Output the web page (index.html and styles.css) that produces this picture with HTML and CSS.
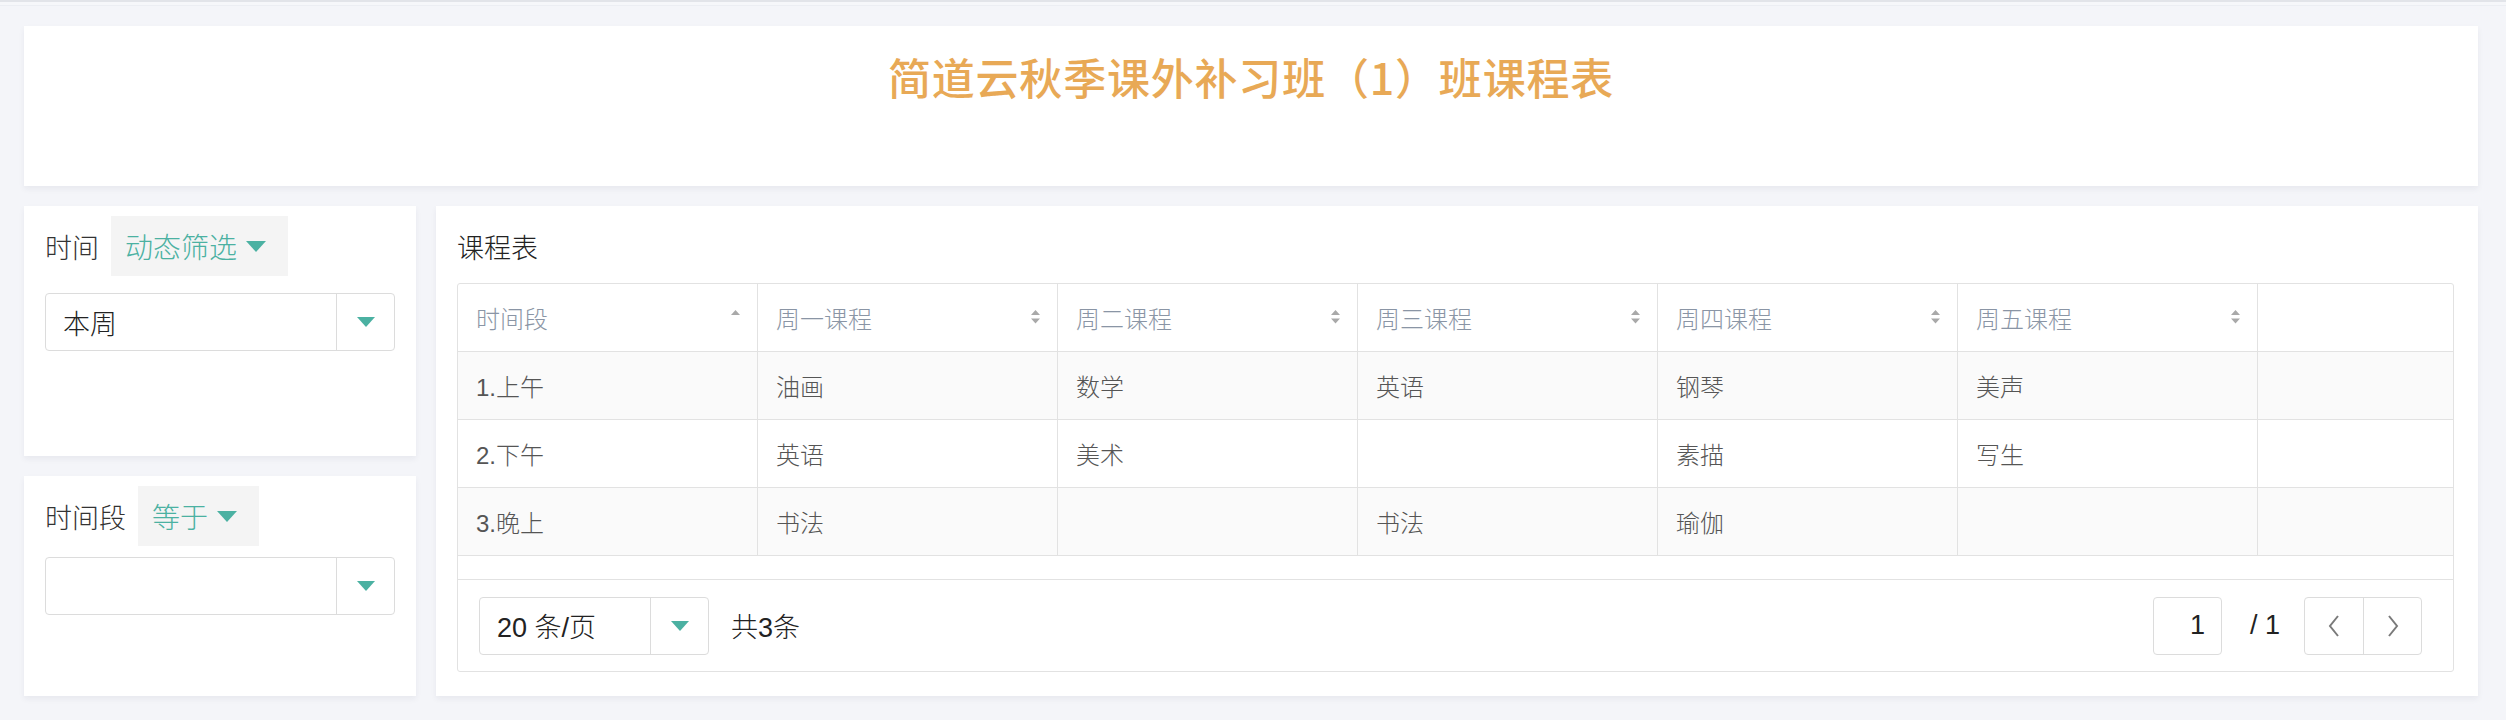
FILE: index.html
```html
<!DOCTYPE html>
<html lang="zh-CN">
<head>
<meta charset="utf-8">
<title>简道云秋季课外补习班（1）班课程表</title>
<link rel="stylesheet" href="styles.css">
</head>
<body>
<div class="topbar"></div>
<div class="page">
  <header class="card title-card">
    <h1 class="title">简道云秋季课外补习班（1）班课程表</h1>
  </header>
  <div class="main">
    <aside class="filters">
      <section class="card filter filter-time">
        <div class="filter-head">
          <span class="label">时间</span>
          <span class="mode">动态筛选<i class="caret caret-lg"></i></span>
        </div>
        <div class="select">
          <span class="select-value">本周</span>
          <span class="select-arrow"><i class="caret"></i></span>
        </div>
      </section>
      <section class="card filter filter-slot">
        <div class="filter-head">
          <span class="label">时间段</span>
          <span class="mode">等于<i class="caret caret-lg"></i></span>
        </div>
        <div class="select select-tight">
          <span class="select-value"></span>
          <span class="select-arrow"><i class="caret"></i></span>
        </div>
      </section>
    </aside>
    <section class="card table-card">
      <div class="table-title">课程表</div>
      <div class="grid">
        <table class="sheet">
          <thead>
            <tr>
              <th class="col"><div class="th-inner"><span>时间段</span><svg class="sort" width="11" height="16" viewBox="0 0 11 16"><path d="M1 6 L5.5 1 L10 6 Z" fill="#a9a9a9"/></svg></div></th>
              <th class="col"><div class="th-inner"><span>周一课程</span><svg class="sort" width="11" height="16" viewBox="0 0 11 16"><path d="M1 6 L5.5 1 L10 6 Z M1 9.5 L5.5 14.5 L10 9.5 Z" fill="#a9a9a9"/></svg></div></th>
              <th class="col"><div class="th-inner"><span>周二课程</span><svg class="sort" width="11" height="16" viewBox="0 0 11 16"><path d="M1 6 L5.5 1 L10 6 Z M1 9.5 L5.5 14.5 L10 9.5 Z" fill="#a9a9a9"/></svg></div></th>
              <th class="col"><div class="th-inner"><span>周三课程</span><svg class="sort" width="11" height="16" viewBox="0 0 11 16"><path d="M1 6 L5.5 1 L10 6 Z M1 9.5 L5.5 14.5 L10 9.5 Z" fill="#a9a9a9"/></svg></div></th>
              <th class="col"><div class="th-inner"><span>周四课程</span><svg class="sort" width="11" height="16" viewBox="0 0 11 16"><path d="M1 6 L5.5 1 L10 6 Z M1 9.5 L5.5 14.5 L10 9.5 Z" fill="#a9a9a9"/></svg></div></th>
              <th class="col"><div class="th-inner"><span>周五课程</span><svg class="sort" width="11" height="16" viewBox="0 0 11 16"><path d="M1 6 L5.5 1 L10 6 Z M1 9.5 L5.5 14.5 L10 9.5 Z" fill="#a9a9a9"/></svg></div></th>
              <th class="col-last"></th>
            </tr>
          </thead>
          <tbody>
            <tr class="odd">
              <td>1.上午</td><td>油画</td><td>数学</td><td>英语</td><td>钢琴</td><td>美声</td><td></td>
            </tr>
            <tr>
              <td>2.下午</td><td>英语</td><td>美术</td><td></td><td>素描</td><td>写生</td><td></td>
            </tr>
            <tr class="odd">
              <td>3.晚上</td><td>书法</td><td></td><td>书法</td><td>瑜伽</td><td></td><td></td>
            </tr>
          </tbody>
        </table>
        <div class="spacer"></div>
        <div class="pager">
          <div class="pager-left">
            <div class="select page-size">
              <span class="select-value">20 条/页</span>
              <span class="select-arrow"><i class="caret"></i></span>
            </div>
            <span class="total">共3条</span>
          </div>
          <div class="pager-right">
            <span class="page-input">1</span>
            <span class="page-count">/ 1</span>
            <div class="nav-group">
              <span class="nav-btn"><svg width="16" height="26" viewBox="0 0 16 26"><path d="M12 3 L4 13 L12 23" fill="none" stroke="#7a7a7a" stroke-width="2"/></svg></span>
              <span class="nav-btn"><svg width="16" height="26" viewBox="0 0 16 26"><path d="M4 3 L12 13 L4 23" fill="none" stroke="#7a7a7a" stroke-width="2"/></svg></span>
            </div>
          </div>
        </div>
      </div>
    </section>
  </div>
</div>
</body>
</html>
```
FILE: styles.css
```css
* { box-sizing: border-box; }

html, body {
  margin: 0;
  padding: 0;
}

body {
  background: #f4f5f9;
  font-family: "Liberation Sans", "Noto Sans CJK SC", sans-serif;
  color: #333;
  height: 720px;
  overflow: hidden;
}

.topbar {
  height: 6px;
  border-top: 2px solid #e2e4e9;
  border-bottom: 1px solid #eceef3;
  background: #f6f7fa;
}

.page {
  padding: 20px 28px 0 24px;
}

.card {
  background: #fff;
  box-shadow: 0 3px 6px rgba(30, 40, 70, 0.06);
}

.title-card {
  height: 160px;
  padding-top: 20px;
}

.title {
  margin: 0;
  text-align: center;
  font-family: "Noto Sans CJK SC", sans-serif;
  font-size: 43px;
  font-weight: 500;
  line-height: 60px;
  color: #e8a956;
  letter-spacing: 0.8px;
}

.main {
  display: flex;
  gap: 20px;
  margin-top: 20px;
}

.filters {
  width: 392px;
  flex: none;
  display: flex;
  flex-direction: column;
  gap: 20px;
}

.filter {
  padding: 10px 21px 0 21px;
}

.filter-time {
  height: 250px;
}

.filter-slot {
  flex: 1;
}

.filter-head {
  display: flex;
  align-items: center;
  height: 60px;
}

.label {
  font-family: "Noto Sans CJK SC", sans-serif;
  font-size: 27px;
  font-weight: 300;
  color: #333;
  margin-right: 12px;
}

.mode {
  display: flex;
  align-items: center;
  height: 60px;
  padding: 0 22px 0 14px;
  background: #f4f4f4;
  font-family: "Noto Sans CJK SC", sans-serif;
  font-size: 28px;
  font-weight: 300;
  color: #4bb1a2;
}

.caret {
  display: inline-block;
  width: 0;
  height: 0;
  border-left: 9px solid transparent;
  border-right: 9px solid transparent;
  border-top: 10px solid #4bb1a2;
}

.caret-lg {
  margin-left: 9px;
  border-left-width: 10px;
  border-right-width: 10px;
  border-top-width: 11px;
}

.select {
  display: flex;
  width: 350px;
  height: 58px;
  margin-top: 17px;
  border: 1px solid #dcdcdc;
  border-radius: 4px;
  background: #fff;
}

.select-tight {
  margin-top: 11px;
}

.select-value {
  flex: 1;
  display: flex;
  align-items: center;
  padding-left: 17px;
  font-size: 27px;
  font-weight: 300;
  color: #222;
  font-family: "Liberation Sans", "Noto Sans CJK SC", sans-serif;
}

.select-arrow {
  width: 58px;
  flex: none;
  display: flex;
  align-items: center;
  justify-content: center;
  border-left: 1px solid #dcdcdc;
}

.table-card {
  flex: 1;
  height: 490px;
  padding: 21px 24px 24px 21px;
}

.table-title {
  height: 40px;
  line-height: 40px;
  font-family: "Noto Sans CJK SC", sans-serif;
  font-size: 27px;
  font-weight: 300;
  color: #222;
  margin-bottom: 16px;
}

.grid {
  border: 1px solid #e2e2e2;
  border-radius: 3px;
}

.sheet {
  width: 100%;
  border-collapse: separate;
  border-spacing: 0;
  table-layout: fixed;
  font-family: "Liberation Sans", "Noto Sans CJK SC", sans-serif;
}

.sheet th,
.sheet td {
  height: 68px;
  padding: 0 18px;
  border-right: 1px solid #e2e2e2;
  border-bottom: 1px solid #e2e2e2;
  text-align: left;
  font-size: 24px;
  font-weight: 300;
  vertical-align: middle;
}

.sheet th {
  color: #8a95a5;
  font-weight: 300;
}

.sheet td {
  color: #555;
}

.sheet th.col {
  width: 300px;
}

.sheet th:last-child,
.sheet td:last-child {
  border-right: none;
}

.th-inner {
  display: flex;
  align-items: center;
  justify-content: space-between;
}

.sort {
  display: block;
  margin-right: -2px;
  margin-top: -2px;
}

.sheet tr.odd td {
  background: #fafafa;
}

.spacer {
  height: 24px;
  border-bottom: 1px solid #e2e2e2;
}

.pager {
  height: 91px;
  display: flex;
  align-items: center;
  justify-content: space-between;
  padding: 0 31px 0 21px;
}

.pager-left {
  display: flex;
  align-items: center;
}

.page-size {
  width: 230px;
  margin-top: 0;
}

.total {
  margin-left: 22px;
  font-size: 27px;
  font-weight: 300;
  color: #222;
}

.pager-right {
  display: flex;
  align-items: center;
}

.page-input {
  width: 69px;
  height: 58px;
  border: 1px solid #dcdcdc;
  border-radius: 4px;
  display: flex;
  align-items: center;
  justify-content: flex-end;
  padding-right: 16px;
  font-size: 27px;
  color: #222;
}

.page-count {
  margin: 0 24px 0 28px;
  font-size: 27px;
  color: #222;
}

.nav-group {
  display: flex;
  height: 58px;
  border: 1px solid #dcdcdc;
  border-radius: 4px;
}

.nav-btn {
  width: 58px;
  display: flex;
  align-items: center;
  justify-content: center;
}

.nav-btn + .nav-btn {
  border-left: 1px solid #dcdcdc;
}
```
